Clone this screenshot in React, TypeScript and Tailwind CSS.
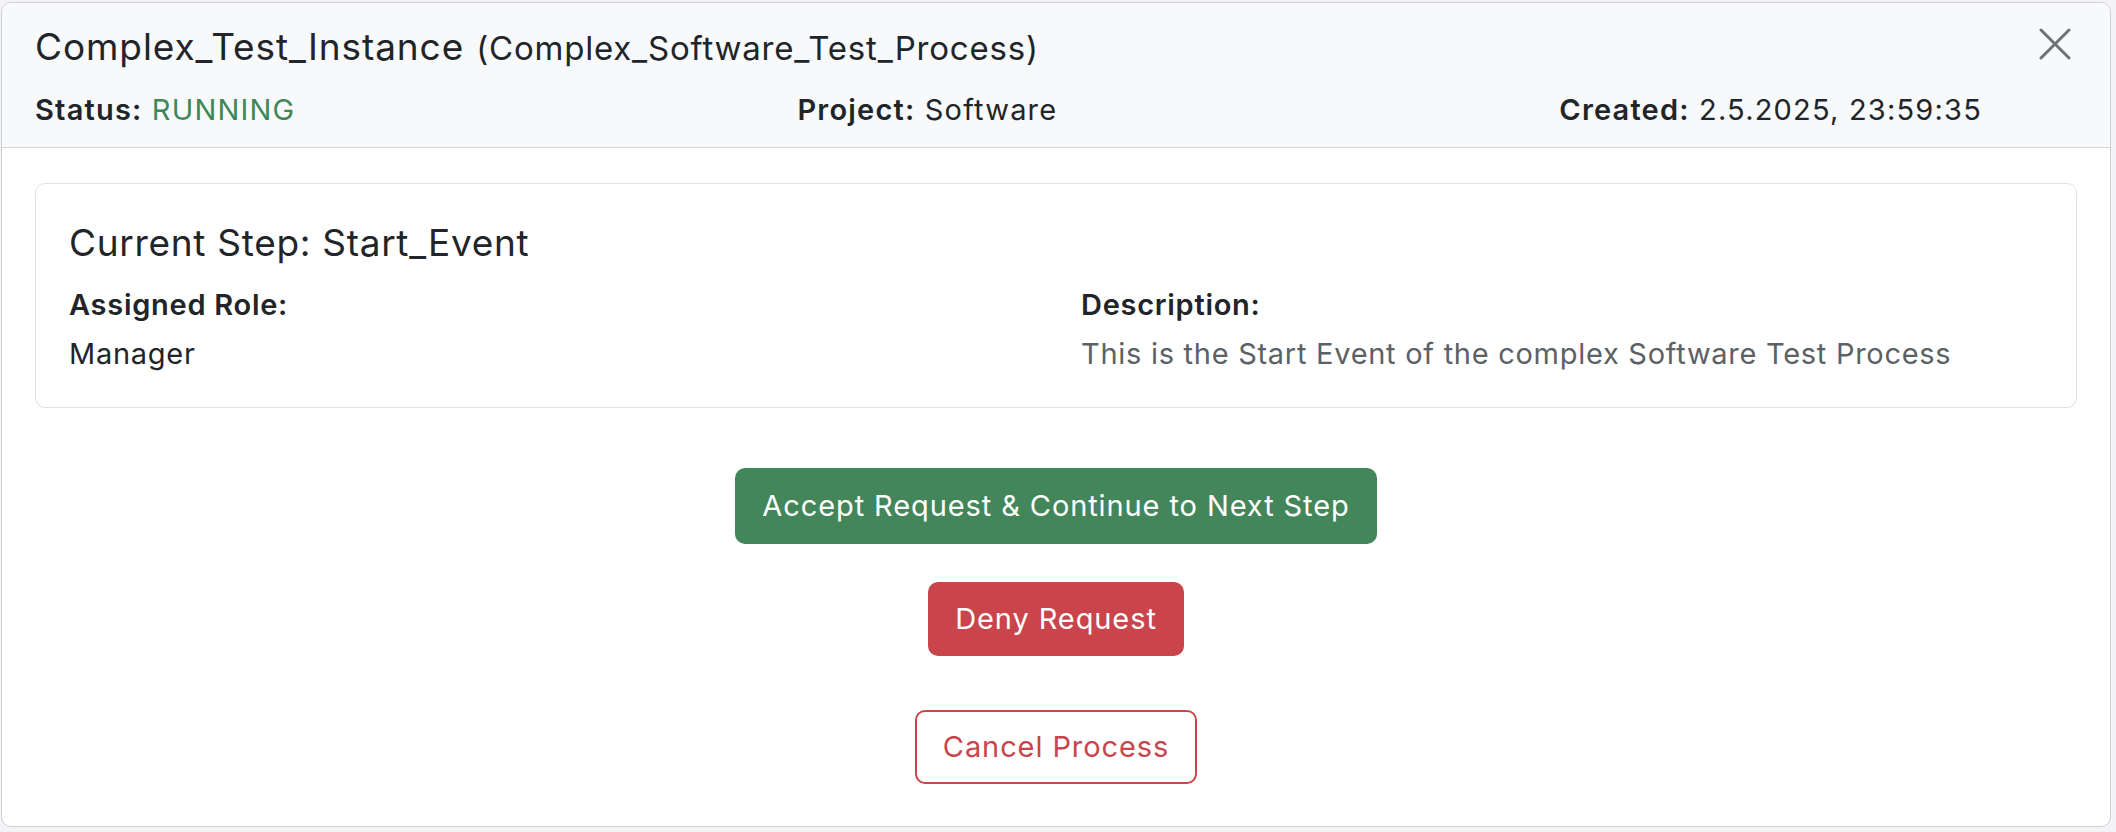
const font = { fontFamily: 'Inter, "Noto Sans", sans-serif' };

function InfoItem({ label, children }: { label: string; children: React.ReactNode }) {
  return (
    <div className="text-[29px] leading-[44px] tracking-[1.2px] text-[#212529]">
      <span className="font-semibold">{label}</span> {children}
    </div>
  );
}

export default function App() {
  return (
    <div className="min-h-screen bg-[#f3f3f5] pt-[2px] pl-[1px]" style={font}>
      <div className="w-[2110px] h-[825px] bg-white border border-[#cfd0d2] rounded-[10px] overflow-hidden flex flex-col">
        {/* header */}
        <div className="flex items-start bg-[#f8f9fa] border-b border-[#d5d7da] pl-[33px] pr-[39px] pt-[22px] pb-[15px]">
          <div className="flex-1 flex flex-col">
            <div className="flex items-baseline text-[#212529] leading-[44px]">
              <span className="text-[37px] tracking-[0.9px]">Complex_Test_Instance</span>
              <span className="text-[33px] tracking-[0.8px] ml-[12px]">(Complex_Software_Test_Process)</span>
            </div>
            <div className="flex justify-between mt-[18px]">
              <InfoItem label="Status:">
                <span className="text-[#3f8757]">RUNNING</span>
              </InfoItem>
              <InfoItem label="Project:">Software</InfoItem>
              <InfoItem label="Created:">2.5.2025, 23:59:35</InfoItem>
            </div>
          </div>
          <button type="button" className="ml-[57px] mt-[3px] w-[32px] h-[32px] text-[#6f7173]">
            <svg width="32" height="32" viewBox="0 0 32 32" fill="none" stroke="currentColor" strokeWidth="3" strokeLinecap="round">
              <path d="M2 2L30 30M30 2L2 30" />
            </svg>
          </button>
        </div>

        {/* body */}
        <div className="flex-1 px-[33px] pt-[35px]">
          <div className="border border-[#dee2e6] rounded-[10px] pl-[33px] pr-[33px] pt-[37px] pb-[32px]">
            <h5 className="text-[37px] leading-[44px] tracking-[0.7px] text-[#212529]">Current Step: Start_Event</h5>
            <div className="grid grid-cols-2 gap-x-[50px] mt-[19px] text-[29px] leading-[42px] tracking-[0.72px]">
              <div>
                <div className="font-semibold text-[#212529]">Assigned Role:</div>
                <div className="mt-[7px] text-[#212529]">Manager</div>
              </div>
              <div>
                <div className="font-semibold text-[#212529]">Description:</div>
                <div className="mt-[7px] text-[#5c6166]">This is the Start Event of the complex Software Test Process</div>
              </div>
            </div>
          </div>

          <div className="flex flex-col items-center mt-[60px] text-[29px] tracking-[0.9px]">
            <button type="button" className="h-[76px] px-[27px] rounded-[10px] bg-[#43865a] text-white">
              Accept Request &amp; Continue to Next Step
            </button>
            <button type="button" className="mt-[38px] h-[74px] px-[27px] rounded-[10px] bg-[#c9444b] text-white">
              Deny Request
            </button>
            <button type="button" className="mt-[54px] h-[74px] px-[26px] rounded-[10px] border-2 border-[#c9444b] bg-white text-[#c9444b]">
              Cancel Process
            </button>
          </div>
        </div>
      </div>
    </div>
  );
}
